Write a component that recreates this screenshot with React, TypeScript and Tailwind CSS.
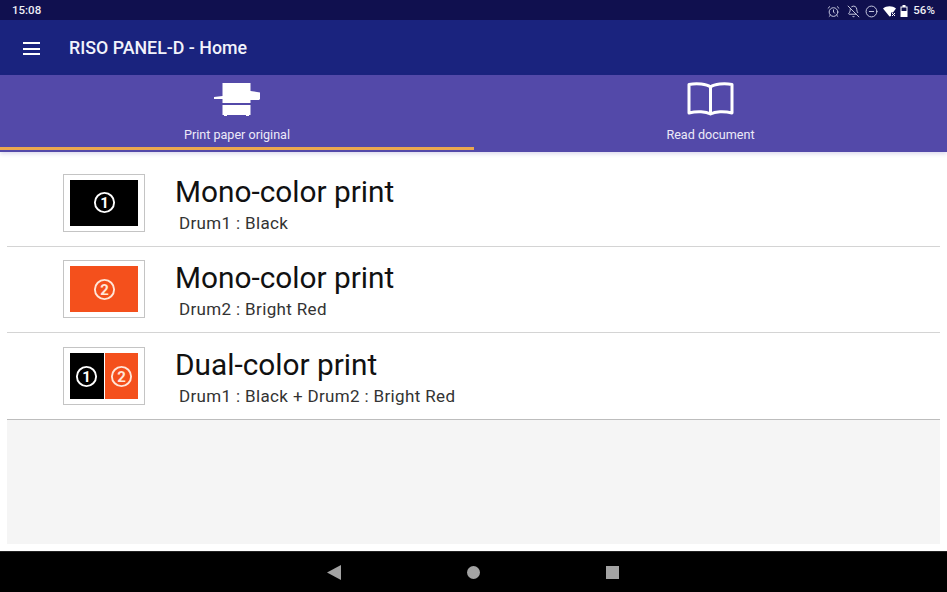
import { AlarmClock, BellOff, MinusCircle } from "lucide-react";

const font = { fontFamily: "Roboto, sans-serif" };

function Circled({ n, color = "white" }: { n: string; color?: string }) {
  return (
    <svg width="23" height="23" viewBox="0 0 23 23">
      <circle cx="11.5" cy="11.5" r="9.6" fill="none" stroke={color} strokeWidth="1.9" />
      <text x="11.5" y="16.8" textAnchor="middle" fontSize="15" fontWeight="700" fill={color} fontFamily="Roboto, sans-serif">
        {n}
      </text>
    </svg>
  );
}

function Thumb({ kind }: { kind: "black" | "red" | "dual" }) {
  return (
    <div className="flex h-[58px] w-[82px] shrink-0 border border-[#c4c4c4] bg-white py-[5px] pl-[6px] pr-[6px]">
      {kind === "black" && (
        <div className="flex flex-1 items-center justify-center bg-black">
          <Circled n="1" />
        </div>
      )}
      {kind === "red" && (
        <div className="flex flex-1 items-center justify-center bg-[#f4501c]">
          <Circled n="2" color="#ffe6d8" />
        </div>
      )}
      {kind === "dual" && (
        <div className="flex flex-1 gap-[1px]">
          <div className="flex flex-1 items-center justify-center bg-black">
            <Circled n="1" />
          </div>
          <div className="flex flex-1 items-center justify-center bg-[#f4501c]">
            <Circled n="2" color="#ffe6d8" />
          </div>
        </div>
      )}
    </div>
  );
}

function Row({ kind, title, sub, last }: { kind: "black" | "red" | "dual"; title: string; sub: string; last?: boolean }) {
  return (
    <div className={`flex items-center pl-[56px] ${last ? "h-[86px]" : "h-[86.5px] border-b border-[#d4d4d4]"}`}>
      <Thumb kind={kind} />
      <div className="ml-[30px] flex flex-col pt-[4px]">
        <div className="text-[29.8px] leading-[33px] text-[#111111]">{title}</div>
        <div className="mt-[3px] pl-[4px] text-[17px] leading-[24px] tracking-[0.35px] text-[#333333]">{sub}</div>
      </div>
    </div>
  );
}

function PrinterIcon() {
  return (
    <svg width="48" height="34" viewBox="0 0 48 34" fill="white">
      <path d="M9.500 0h28v8l9.500 1.500V16l-1 1H37.500v3H9.500v-4H1v-2l8.500-1z" />
      <path d="M9.500 22h28v10h-1.500v1h-3v-1H14v1h-3v-1H9.500z" />
    </svg>
  );
}

function BookIcon() {
  return (
    <svg width="47" height="34" viewBox="0 0 47 34" fill="none" stroke="white" strokeWidth="3" strokeLinejoin="round">
      <path d="M23.500 5C19.500 2 10 1 2 2.500V31C10 29 19 29.500 23.500 32C28 29.500 37 29 45 31V2.500C37 1 27.500 2 23.500 5Z" />
      <path d="M23.500 5V32" />
    </svg>
  );
}

export default function App() {
  return (
    <div className="flex h-[592px] w-[947px] flex-col overflow-hidden bg-white" style={font}>
      {/* status bar */}
      <div className="flex h-[20px] items-center justify-between bg-[#10104f] px-[12px] pt-[2px] text-[11.5px] font-medium text-[#eeeef5]">
        <span>15:08</span>
        <div className="flex items-center">
          <AlarmClock size={13} strokeWidth={1.8} className="text-[#c9cbe0]" />
          <BellOff size={13} strokeWidth={1.8} className="ml-[7px] text-[#c9cbe0]" />
          <MinusCircle size={13} strokeWidth={1.8} className="ml-[5px] text-[#c9cbe0]" />
          <svg width="13" height="11" viewBox="0 0 13 11" fill="white" className="ml-[5px]">
            <path d="M0 2.500C3.500-.5 9.500-.5 13 2.500L10 6.500H8V10L6.500 10.500z" />
            <path d="M9 7l3 3M12 7l-3 3" stroke="white" strokeWidth="1" />
          </svg>
          <svg width="8" height="12" viewBox="0 0 8 12" fill="white" className="ml-[4px]">
            <path d="M2.500 0h3v1.500H7.500V12H.5V1.500h2zM1.500 2.500V6h5V2.500z" fillRule="evenodd" />
          </svg>
          <span className="ml-[5px] tracking-[0.1px]">56%</span>
        </div>
      </div>

      {/* app bar */}
      <div className="flex h-[55px] items-center bg-[#1a237e] pl-[23px] pt-[2px] text-white">
        <div className="flex w-[17px] flex-col gap-[3.500px]">
          <div className="h-[2px] bg-white" />
          <div className="h-[2px] bg-white" />
          <div className="h-[2px] bg-white" />
        </div>
        <div className="ml-[29px] text-[17.8px] font-medium text-[#f2f3fb]">RISO PANEL-D - Home</div>
      </div>

      {/* tabs */}
      <div className="flex h-[77px] bg-[#5349a9] text-white shadow-[0_2px_4px_rgba(83,73,169,0.2)]">
        <div className="flex w-[474px] flex-col items-center">
          <div className="mt-[8px] h-[34px]">
            <PrinterIcon />
          </div>
          <div className="mt-[10px] text-[12.6px] leading-[16px] text-[#ece9f8]">Print paper original</div>
          <div className="mb-[2px] mt-auto h-[3px] w-full bg-[#eba84f]" />
        </div>
        <div className="flex flex-1 flex-col items-center">
          <div className="mt-[7px] h-[34px]">
            <BookIcon />
          </div>
          <div className="mt-[11px] text-[12.6px] leading-[16px] text-[#ece9f8]">Read document</div>
        </div>
      </div>

      {/* list */}
      <div className="flex flex-1 flex-col px-[7px] pt-[8px]">
        <div className="border-b border-[#bdbdbd]">
          <Row kind="black" title="Mono-color print" sub="Drum1 : Black" />
          <Row kind="red" title="Mono-color print" sub="Drum2 : Bright Red" />
          <Row kind="dual" title="Dual-color print" sub="Drum1 : Black + Drum2 : Bright Red" last />
        </div>
        <div className="mb-[7px] flex-1 bg-[#f5f5f5]" />
      </div>

      {/* nav bar */}
      <div className="flex h-[41px] items-center justify-center gap-[126px] border-t border-[#222] bg-black pr-[2px]">
        <svg width="14" height="15" viewBox="0 0 14 15" fill="#a3a3a3">
          <path d="M14 0V15L0 7.500z" />
        </svg>
        <div className="h-[13px] w-[13px] rounded-full bg-[#a3a3a3]" />
        <div className="h-[13px] w-[13px] bg-[#a3a3a3]" />
      </div>
    </div>
  );
}
